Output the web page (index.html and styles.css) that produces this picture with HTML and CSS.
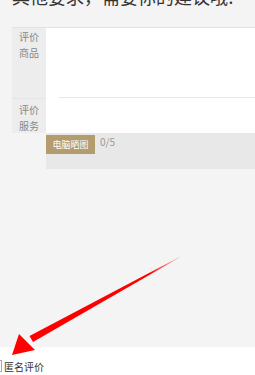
FILE: index.html
```html
<!DOCTYPE html>
<html lang="zh-CN">

<head>
    <meta charset="UTF-8">
    <meta name="viewport" content="width=device-width, initial-scale=1.0">
    <title>评价</title>
    <link rel="stylesheet" href="styles.css">
</head>

<body>
    <p class="tip">其他要求，需要你的建议哦!</p>

    <div class="form">
        <div class="row row-goods">
            <div class="label">评价<br>商品</div>
            <div class="field">
                <div class="textarea"></div>
            </div>
        </div>
        <div class="row row-service">
            <div class="label">评价<br>服务</div>
            <div class="field"></div>
        </div>
        <div class="upload">
            <button class="upload-btn">电脑晒图</button>
            <span class="count">0/5</span>
        </div>
    </div>

    <footer class="footer">
        <label class="anon">
            <span class="checkbox"></span>
            匿名评价
        </label>
    </footer>

    <!-- red arrow pointing at the checkbox -->
    <svg class="arrow" width="255" height="375" viewBox="0 0 255 375">
        <defs>
            <linearGradient id="fade" x1="180" y1="257" x2="150" y2="274" gradientUnits="userSpaceOnUse">
                <stop offset="0" stop-color="#ff0000" stop-opacity="0.15" />
                <stop offset="1" stop-color="#ff0000" stop-opacity="1" />
            </linearGradient>
        </defs>
        <polygon points="180.3,256.6 179.7,257.4 33,342 29.5,336" fill="url(#fade)" />
        <polygon points="12,355 19,334 35,350" fill="#ff0000" />
    </svg>
</body>

</html>
```

FILE: styles.css
```css
body {
    font-family: 'Noto Sans CJK SC', 'Noto Sans', sans-serif;
    margin: 0;
    padding: 0;
    background-color: #f4f4f4;
    width: 255px;
    height: 375px;
    overflow: hidden;
    position: relative;
}

.tip {
    margin: -16px 0 0;
    padding-left: 12px;
    font-size: 18px;
    line-height: 24px;
    color: #333;
    white-space: nowrap;
}

.form {
    margin: 19px 0 0 12px;
}

.row {
    display: flex;
}

.row-goods {
    height: 70px;
    border-top: 1px solid #e3e3e3;
}

.row-service {
    height: 35px;
}

.label {
    width: 34px;
    background-color: #ededed;
    color: #888;
    font-size: 10px;
    line-height: 16px;
    text-align: center;
    padding-top: 1px;
    box-sizing: border-box;
}

.row-service .label {
    padding-top: 3px;
    border-top: 1px solid #e6e6e6;
}

.field {
    flex: 1;
    background-color: white;
}

.textarea {
    height: 69px;
    margin-left: 13px;
    border-bottom: 1px solid #e8e8e8;
}

.upload {
    margin-left: 34px;
    height: 36px;
    background-color: #e8e8e8;
    display: flex;
    align-items: flex-start;
    padding-top: 2px;
    box-sizing: border-box;
}

.upload-btn {
    width: 49px;
    height: 19px;
    border: none;
    padding: 0;
    background-color: #b39c6e;
    color: white;
    font-family: inherit;
    font-size: 9px;
}

.count {
    margin-left: 5px;
    font-size: 10px;
    line-height: 14px;
    color: #999;
}

.footer {
    position: absolute;
    left: 0;
    right: 0;
    bottom: 0;
    height: 28px;
    background-color: white;
    display: flex;
    align-items: center;
}

.anon {
    display: flex;
    align-items: center;
    font-size: 10px;
    color: #333;
    margin-top: 10px;
}

.checkbox {
    width: 10px;
    height: 10px;
    border: 1px solid #aaa;
    margin-left: -10px;
    margin-right: 2px;
}

.arrow {
    position: absolute;
    left: 0;
    top: 0;
    pointer-events: none;
}
```
